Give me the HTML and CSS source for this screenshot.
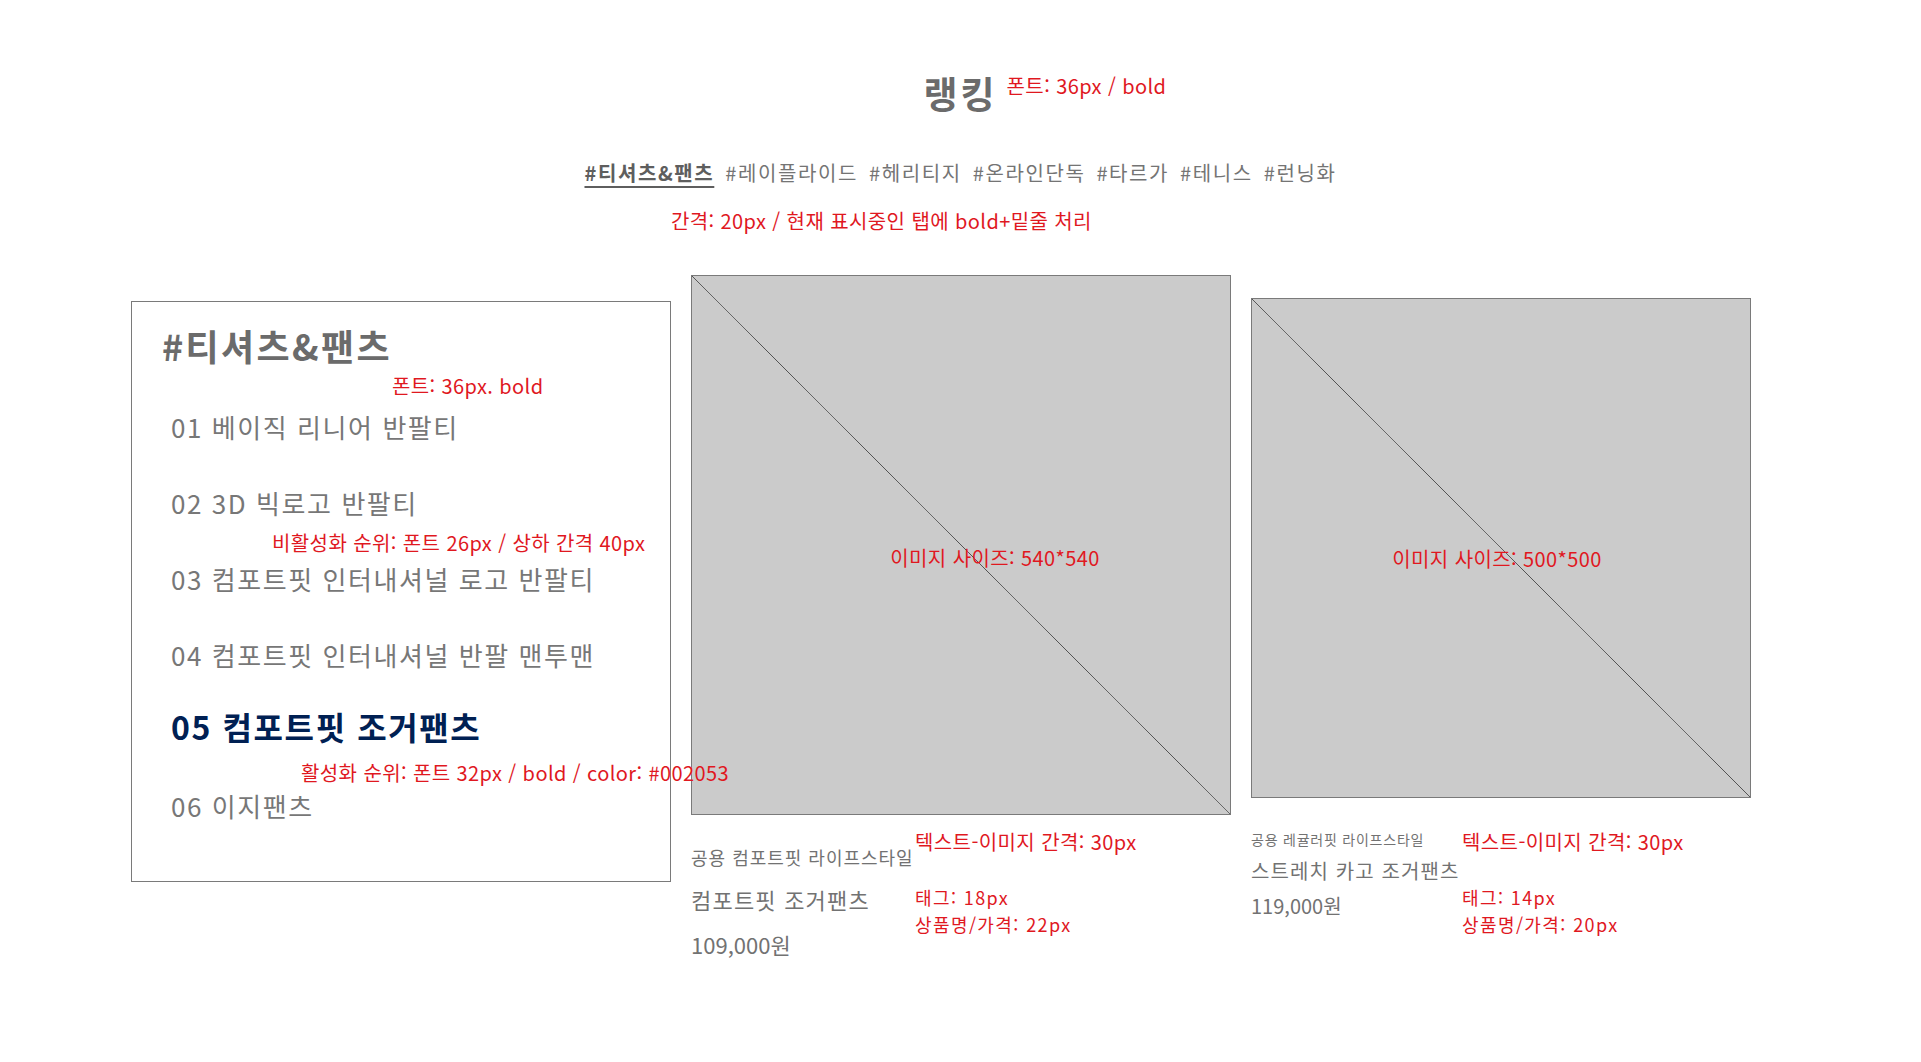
FILE: index.html
```html
<!DOCTYPE html>
<html lang="ko">
<head>
    <meta charset="UTF-8">
    <meta name="viewport" content="width=device-width, initial-scale=1.0">
    <title>랭킹</title>
    <link rel="stylesheet" href="styles.css">
</head>
<body>
    <main class="ranking">
        <header class="ranking-head">
            <h1 class="ranking-title">랭킹<span class="note note-title">폰트: 36px / bold</span></h1>
            <nav class="tabs">
                <a class="tab active">#티셔츠&amp;팬츠</a>
                <a class="tab">#레이플라이드</a>
                <a class="tab">#헤리티지</a>
                <a class="tab">#온라인단독</a>
                <a class="tab">#타르가</a>
                <a class="tab">#테니스</a>
                <a class="tab">#런닝화</a>
            </nav>
            <p class="note note-tabs">간격: 20px / 현재 표시중인 탭에 bold+밑줄 처리</p>
        </header>

        <section class="ranking-body">
            <div class="rank-box">
                <h2 class="rank-heading">#티셔츠&amp;팬츠</h2>
                <span class="note note-heading">폰트: 36px. bold</span>
                <ol class="rank-list">
                    <li>01 베이직 리니어 반팔티</li>
                    <li>02 3D 빅로고 반팔티</li>
                    <li>03 컴포트핏 인터내셔널 로고 반팔티</li>
                    <li>04 컴포트핏 인터내셔널 반팔 맨투맨</li>
                    <li class="active">05 컴포트핏 조거팬츠</li>
                    <li>06 이지팬츠</li>
                </ol>
                <span class="note note-inactive">비활성화 순위: 폰트 26px / 상하 간격 40px</span>
                <span class="note note-active">활성화 순위: 폰트 32px / bold / color: #002053</span>
            </div>

            <figure class="product product-lg">
                <div class="thumb">
                    <svg class="diag" viewBox="0 0 100 100" preserveAspectRatio="none"><line x1="0" y1="0" x2="100" y2="100"/></svg>
                    <span class="note">이미지 사이즈: 540*540</span>
                </div>
                <figcaption class="caption">
                    <p class="tag">공용 컴포트핏 라이프스타일</p>
                    <p class="name">컴포트핏 조거팬츠</p>
                    <p class="price">109,000원</p>
                    <div class="note caption-notes">
                        <p>텍스트-이미지 간격: 30px</p>
                        <p class="sizes">태그: 18px<br>상품명/가격: 22px</p>
                    </div>
                </figcaption>
            </figure>

            <figure class="product product-md">
                <div class="thumb">
                    <svg class="diag" viewBox="0 0 100 100" preserveAspectRatio="none"><line x1="0" y1="0" x2="100" y2="100"/></svg>
                    <span class="note">이미지 사이즈: 500*500</span>
                </div>
                <figcaption class="caption">
                    <p class="tag">공용 레귤러핏 라이프스타일</p>
                    <p class="name">스트레치 카고 조거팬츠</p>
                    <p class="price">119,000원</p>
                    <div class="note caption-notes">
                        <p>텍스트-이미지 간격: 30px</p>
                        <p class="sizes">태그: 14px<br>상품명/가격: 20px</p>
                    </div>
                </figcaption>
            </figure>
        </section>
    </main>
</body>
</html>
```

FILE: styles.css
```css
body {
    margin: 0;
    background: #fff;
    font-family: "Noto Sans CJK KR", "Noto Sans", sans-serif;
    color: #707070;
}
p, h1, h2, ol, figure {
    margin: 0;
    padding: 0;
}
.note {
    color: #e0181f;
    font-size: 20px;
    line-height: 26px;
    font-weight: 400;
    letter-spacing: 0.4px;
    white-space: nowrap;
}

/* header */
.ranking-head {
    padding-top: 68px;
}
.ranking-title {
    position: relative;
    width: max-content;
    margin: 0 auto;
    font-size: 37px;
    line-height: 50px;
    font-weight: 700;
    letter-spacing: 3px;
    color: #6b6b6b;
}
.note-title {
    position: absolute;
    left: calc(100% + 9px);
    top: 5px;
}
.tabs {
    display: flex;
    justify-content: center;
    gap: 11px;
    margin-top: 41px;
    font-size: 20px;
    line-height: 28px;
    letter-spacing: 0.08em;
}
.tab {
    color: #747474;
}
.tab.active {
    font-weight: 700;
    color: #5e5e5e;
    text-decoration: underline;
    text-decoration-thickness: 1.5px;
    text-underline-offset: 5px;
}
.note-tabs {
    margin: 21px 0 0 671px;
}

/* body */
.ranking-body {
    display: flex;
    align-items: flex-start;
    gap: 20px;
    margin-top: 41px;
    padding-left: 131px;
}
.rank-box {
    position: relative;
    box-sizing: border-box;
    width: 540px;
    margin-top: 26px;
    padding: 20px 0 57px 30px;
    border: 1px solid #7a7a7a;
}
.rank-heading {
    font-size: 36px;
    line-height: 47px;
    font-weight: 700;
    letter-spacing: 0.065em;
    color: #6b6b6b;
}
.rank-list {
    list-style: none;
    margin-top: 40px;
    padding-left: 9px;
}
.rank-list li {
    font-size: 26px;
    line-height: 36px;
    letter-spacing: 0.06em;
    color: #777;
    margin-bottom: 40px;
}
.rank-list li:last-child {
    margin-bottom: 0;
}
.rank-list li.active {
    margin-top: -7px;
    margin-bottom: 42px;
    font-size: 32px;
    line-height: 40px;
    font-weight: 700;
    letter-spacing: 0.05em;
    color: #002053;
}
.rank-box .note {
    position: absolute;
    z-index: 2;
}
.note-heading {
    left: 260px;
    top: 71px;
}
.note-inactive {
    left: 140px;
    top: 228px;
}
.note-active {
    left: 169px;
    top: 458px;
}

/* products */
.product {
    position: relative;
}
.thumb {
    position: relative;
    box-sizing: border-box;
    display: flex;
    align-items: center;
    justify-content: center;
    background: #cbcbcb;
    border: 1px solid #7a7a7a;
}
.diag {
    position: absolute;
    inset: 0;
    width: 100%;
    height: 100%;
}
.diag line {
    stroke: #222;
    stroke-width: 1;
    stroke-dasharray: 1 0.4;
    vector-effect: non-scaling-stroke;
}
.thumb .note {
    position: relative;
}
.product-lg .thumb {
    width: 540px;
    height: 540px;
    padding: 26px 0 0 68px;
}
.product-md {
    margin-top: 23px;
}
.product-md .thumb {
    width: 500px;
    height: 500px;
    padding: 22px 8px 0 0;
}
.caption {
    position: relative;
    margin-top: 30px;
    color: #727272;
}
.caption > p {
    width: max-content;
}
.tag,
.name {
    letter-spacing: 0.055em;
}
.product-lg .tag {
    font-size: 18px;
    line-height: 24px;
}
.product-lg .name,
.product-lg .price {
    font-size: 22px;
    line-height: 30px;
    margin-top: 15px;
}
.product-md .tag {
    font-size: 14px;
    line-height: 22px;
}
.product-md .name,
.product-md .price {
    font-size: 20px;
    line-height: 28px;
    margin-top: 7px;
}
.caption-notes {
    position: absolute;
    line-height: 25px;
}
.caption-notes p:first-child {
    margin-bottom: 30px;
}
.caption-notes .sizes {
    font-size: 18px;
    line-height: 27px;
    letter-spacing: 1.4px;
}
.product-lg .caption-notes {
    left: 224px;
    top: -16px;
}
.product-md .caption-notes {
    left: 211px;
    top: 1px;
}
```
